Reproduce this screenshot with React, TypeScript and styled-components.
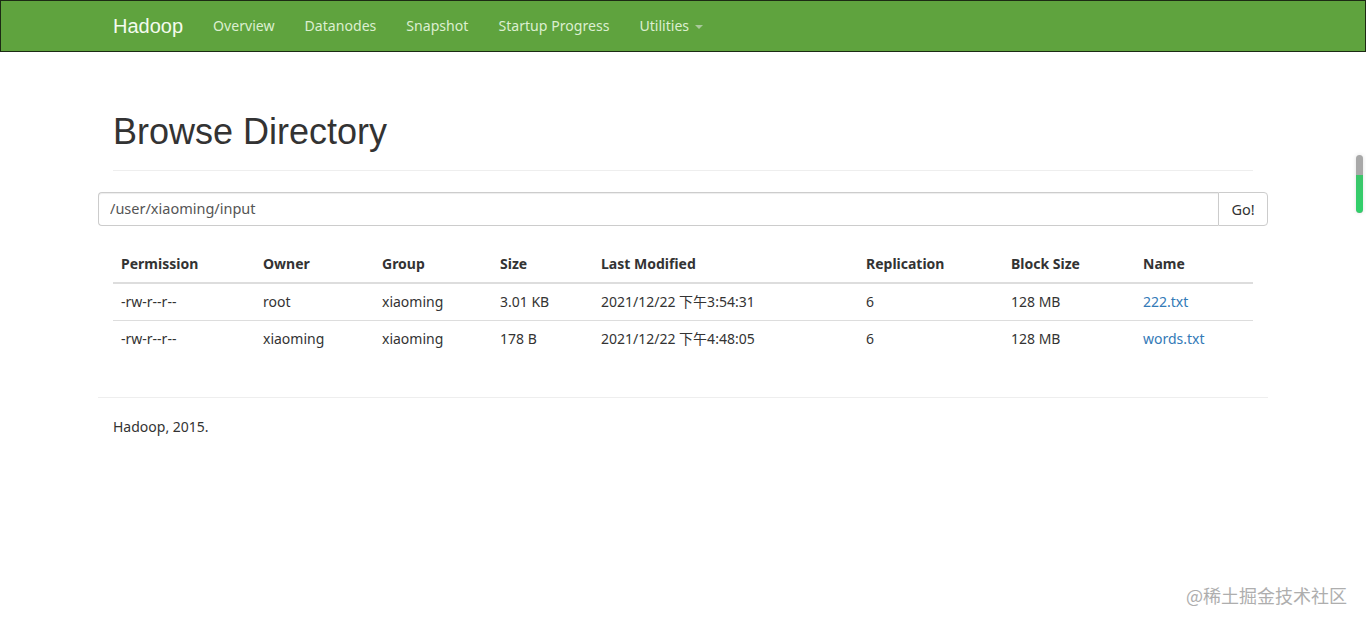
import React from "react";
import styled, { createGlobalStyle } from "styled-components";

const GlobalStyle = createGlobalStyle`
  html, body {
    margin: 0;
    padding: 0;
    background: #fff;
  }
  body {
    font-family: "Noto Sans", "Noto Sans CJK SC", sans-serif;
    font-size: 14px;
    color: #333;
  }
  * {
    box-sizing: border-box;
  }
`;

interface IFile {
    permission: string;
    owner: string;
    group: string;
    size: string;
    modified: string;
    replication: number;
    blockSize: string;
    name: string;
}

const files: IFile[] = [
    {
        permission: "-rw-r--r--",
        owner: "root",
        group: "xiaoming",
        size: "3.01 KB",
        modified: "2021/12/22 下午3:54:31",
        replication: 6,
        blockSize: "128 MB",
        name: "222.txt",
    },
    {
        permission: "-rw-r--r--",
        owner: "xiaoming",
        group: "xiaoming",
        size: "178 B",
        modified: "2021/12/22 下午4:48:05",
        replication: 6,
        blockSize: "128 MB",
        name: "words.txt",
    },
];

const columns = [
    {title: "Permission", width: 142},
    {title: "Owner", width: 119},
    {title: "Group", width: 118},
    {title: "Size", width: 101},
    {title: "Last Modified", width: 265},
    {title: "Replication", width: 145},
    {title: "Block Size", width: 132},
    {title: "Name", width: 118},
];

const navItems = ["Overview", "Datanodes", "Snapshot", "Startup Progress"];

const App = () => {
    return (
        <Page>
            <GlobalStyle/>
            <NavBar>
                <NavInner>
                    <Brand>Hadoop</Brand>
                    <NavList>
                        {navItems.map((item) => (
                            <NavLink key={item}>{item}</NavLink>
                        ))}
                        <NavLink>
                            Utilities <Caret/>
                        </NavLink>
                    </NavList>
                </NavInner>
            </NavBar>

            <Container>
                <PageHeader>
                    <Title>Browse Directory</Title>
                </PageHeader>

                <InputGroup>
                    <PathInput defaultValue="/user/xiaoming/input"/>
                    <GoButton>Go!</GoButton>
                </InputGroup>

                <Table>
                    <colgroup>
                        {columns.map((c) => (
                            <col key={c.title} style={{width: c.width}}/>
                        ))}
                    </colgroup>
                    <thead>
                    <tr>
                        {columns.map((c) => (
                            <Th key={c.title}>{c.title}</Th>
                        ))}
                    </tr>
                    </thead>
                    <tbody>
                    {files.map((f, i) => (
                        <tr key={f.name}>
                            <Td first={i === 0}>{f.permission}</Td>
                            <Td first={i === 0}>{f.owner}</Td>
                            <Td first={i === 0}>{f.group}</Td>
                            <Td first={i === 0}>{f.size}</Td>
                            <Td first={i === 0}>{f.modified}</Td>
                            <Td first={i === 0}>{f.replication}</Td>
                            <Td first={i === 0}>{f.blockSize}</Td>
                            <Td first={i === 0}><FileLink>{f.name}</FileLink></Td>
                        </tr>
                    ))}
                    </tbody>
                </Table>

                <Divider/>
                <Footer>Hadoop, 2015.</Footer>
            </Container>

            <ScrollWidget>
                <ScrollThumb/>
            </ScrollWidget>
            <Watermark>@稀土掘金技术社区</Watermark>
        </Page>
    );
};

const Page = styled.div`
  min-height: 625px;
  position: relative;
`;

const NavBar = styled.nav`
  height: 52px;
  background-color: #5fa33e;
  border: 1px solid #1c2a14;
`;

const NavInner = styled.div`
  width: 1170px;
  margin: 0 auto;
  padding: 0 15px;
  display: flex;
  align-items: center;
  height: 100%;
`;

const Brand = styled.a`
  font-family: "Liberation Sans", Arial, sans-serif;
  font-size: 20px;
  color: #f4fbef;
  padding-right: 15px;
  line-height: 50px;
`;

const NavList = styled.div`
  display: flex;
  align-items: center;
`;

const NavLink = styled.a`
  font-family: "Noto Sans", "Liberation Sans", sans-serif;
  font-size: 14.1px;
  color: #dcefd0;
  padding: 0 15px;
  line-height: 50px;
  display: flex;
  align-items: center;
  gap: 6px;
`;

const Caret = styled.span`
  display: inline-block;
  width: 0;
  height: 0;
  margin-top: 2px;
  border-left: 4px solid transparent;
  border-right: 4px solid transparent;
  border-top: 4px solid #a9c99a;
`;

const Container = styled.div`
  width: 1170px;
  margin: 0 auto;
  padding: 0;
`;

const PageHeader = styled.div`
  margin: 60px 15px 21px;
  padding-bottom: 18px;
  border-bottom: 1px solid #eee;
`;

const Title = styled.h1`
  margin: 0;
  font-family: "Liberation Sans", Arial, sans-serif;
  font-size: 36px;
  font-weight: 400;
  line-height: 40px;
  color: #333;
`;

const InputGroup = styled.div`
  display: flex;
  height: 34px;
`;

const PathInput = styled.input`
  flex: 1;
  height: 34px;
  padding: 5px 11px 7px;
  font-family: "Noto Sans", sans-serif;
  font-size: 14.5px;
  color: #555;
  border: 1px solid #ccc;
  border-right: none;
  border-radius: 4px 0 0 4px;
  box-shadow: inset 0 1px 1px rgba(0, 0, 0, 0.075);
  outline: none;
`;

const GoButton = styled.button`
  width: 50px;
  height: 34px;
  font-family: "Noto Sans", sans-serif;
  font-size: 14.5px;
  color: #333;
  background: #fff;
  border: 1px solid #ccc;
  border-radius: 0 4px 4px 0;
  padding: 0;
`;

const Table = styled.table`
  width: 1140px;
  margin: 20px 15px 0;
  border-collapse: collapse;
  table-layout: fixed;
`;

const Th = styled.th`
  text-align: left;
  padding: 8px;
  line-height: 20px;
  font-weight: 700;
  border-bottom: 2px solid #ddd;
  white-space: nowrap;
`;

const Td = styled.td<{ first: boolean }>`
  padding: 8px;
  line-height: 20px;
  border-top: ${(p) => (p.first ? "none" : "1px solid #ddd")};
  white-space: nowrap;
`;

const FileLink = styled.a`
  color: #337ab7;
  cursor: pointer;
`;

const Divider = styled.hr`
  margin: 40px 0 0;
  border: 0;
  border-top: 1px solid #eee;
`;

const Footer = styled.p`
  margin: 19px 15px 0;
  line-height: 20px;
`;

const ScrollWidget = styled.div`
  position: absolute;
  top: 155px;
  right: 3px;
  width: 7px;
  height: 58px;
  border-radius: 4px;
  background: #a8a8a8;
  overflow: hidden;
  box-shadow: 0 0 4px rgba(0, 0, 0, 0.12);
`;

const ScrollThumb = styled.div`
  margin-top: 20px;
  height: 38px;
  background: linear-gradient(#3cc56a, #2fd16a);
  border-radius: 0 0 4px 4px;
`;

const Watermark = styled.div`
  position: absolute;
  right: 19px;
  top: 583px;
  font-family: "Noto Sans CJK SC", sans-serif;
  font-size: 18px;
  line-height: 24px;
  color: #a6a6a6;
  opacity: 0.9;
`;

export default App;
